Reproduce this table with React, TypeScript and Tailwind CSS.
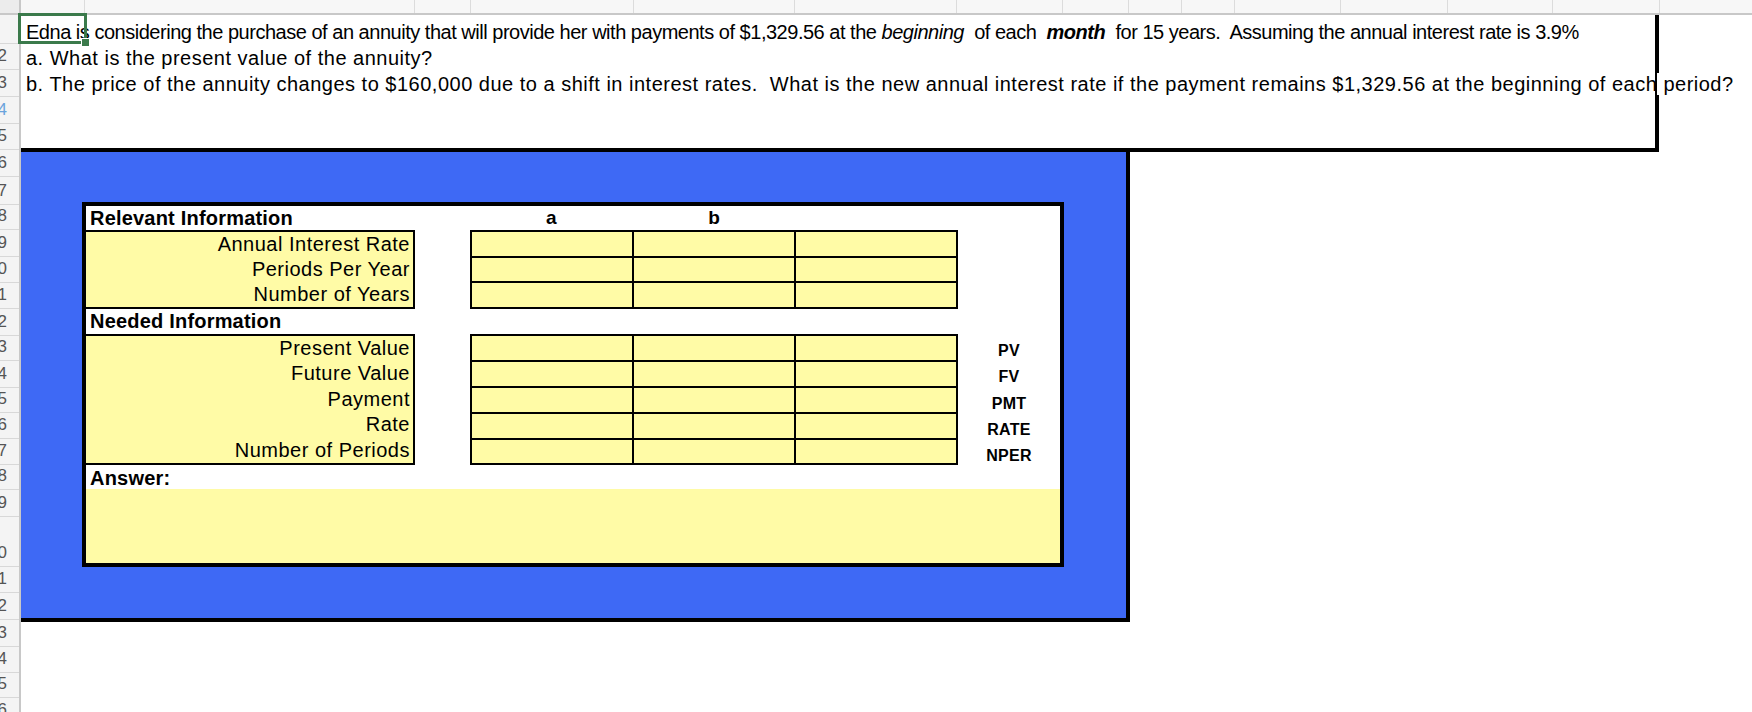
const COLS = [
  "w-[64px]",
  "w-[330px]",
  "w-[56px]",
  "w-[163px]",
  "w-[161px]",
  "w-[162px]",
  "w-[106px]",
  "w-[66px]",
  "w-[53px]",
  "w-[53px]",
  "w-[106px]",
  "w-[107px]",
  "w-[105px]",
  "w-[107px]",
  "w-[120px]",
];

// row number, height class, highlighted
const ROWS: [string, string, boolean?][] = [
  ["", "h-[29px]"],
  ["2", "h-[26px]"],
  ["3", "h-[27px]"],
  ["4", "h-[27px]", true],
  ["5", "h-[26px]"],
  ["6", "h-[27px]"],
  ["7", "h-[28px]"],
  ["8", "h-[25px]"],
  ["9", "h-[27px]"],
  ["10", "h-[26px]"],
  ["11", "h-[26px]"],
  ["12", "h-[27px]"],
  ["13", "h-[25px]"],
  ["14", "h-[27px]"],
  ["15", "h-[25px]"],
  ["16", "h-[26px]"],
  ["17", "h-[26px]"],
  ["18", "h-[25px]"],
  ["19", "h-[27px]"],
  ["20", "h-[50px]"],
  ["21", "h-[26px]"],
  ["22", "h-[27px]"],
  ["23", "h-[27px]"],
  ["24", "h-[26px]"],
  ["25", "h-[25px]"],
  ["26", "h-[26px]"],
];

const RELEVANT = ["Annual Interest Rate", "Periods Per Year", "Number of Years"];
const NEEDED = ["Present Value", "Future Value", "Payment", "Rate", "Number of Periods"];
const FUNCS = ["PV", "FV", "PMT", "RATE", "NPER"];

function ColumnHeader() {
  return (
    <div className="flex h-[15px] border-b-2 border-[#c8c8c8] bg-[#f7f7f7]">
      <div className="w-[21px] shrink-0 border-r-2 border-[#c8c8c8] bg-[#ececec]" />
      {COLS.map((w, i) => (
        <div key={i} className={`${w} shrink-0 border-r border-[#dcdcdc]`} />
      ))}
    </div>
  );
}

function RowHeader() {
  return (
    <div className="w-[21px] shrink-0 overflow-hidden border-r-2 border-[#c8c8c8] bg-[#f4f4f4]">
      {ROWS.map(([n, h, hi]) => (
        <div
          key={h + n}
          className={`${h} flex items-end justify-end border-b border-[#d8d8d8] pb-[3px] pr-[12px] text-[17px] leading-[20px] whitespace-nowrap ${
            hi ? "text-[#6aa3dc]" : "text-[#555]"
          }`}
        >
          {n}
        </div>
      ))}
    </div>
  );
}

function Grid({ rows }: { rows: string }) {
  const count = rows === "relevant" ? 9 : 15;
  return (
    <div
      className={`grid w-[488px] grid-cols-[160px_160px_160px] gap-[2px] bg-black p-[2px] ${
        rows === "relevant"
          ? "h-[79px] grid-rows-[24px_23px_24px]"
          : "h-[131px] grid-rows-[24px_24px_24px_24px_23px]"
      }`}
    >
      {Array.from({ length: count }).map((_, i) => (
        <div key={i} className="bg-[#fffba6]" />
      ))}
    </div>
  );
}

function Worksheet() {
  return (
    <div className="flex h-[365px] w-[982px] flex-col border-4 border-black bg-white">
      <div className="flex h-[24px]">
        <div className="w-[384px] pl-[4px] text-[20px] font-bold leading-[24px] tracking-[0.2px]">
          Relevant Information
        </div>
        <div className="grid w-[488px] grid-cols-3 text-center text-[19px] font-bold leading-[24px]">
          <div>a</div>
          <div>b</div>
          <div />
        </div>
      </div>

      <div className="flex h-[79px]">
        <div className="w-[329px] border-y-2 border-r-2 border-black bg-[#fffba6] pr-[3px] text-right text-[20px] leading-[25px] tracking-[0.5px]">
          {RELEVANT.map((t) => (
            <div key={t}>{t}</div>
          ))}
        </div>
        <div className="w-[55px]" />
        <Grid rows="relevant" />
      </div>

      <div className="h-[25px] pl-[4px] text-[20px] font-bold leading-[25px] tracking-[0.2px]">
        Needed Information
      </div>

      <div className="flex h-[131px]">
        <div className="w-[329px] border-y-2 border-r-2 border-black bg-[#fffba6] pr-[3px] text-right text-[20px] leading-[25.4px] tracking-[0.5px]">
          {NEEDED.map((t) => (
            <div key={t}>{t}</div>
          ))}
        </div>
        <div className="w-[55px]" />
        <Grid rows="needed" />
        <div className="flex w-[102px] flex-col">
          {FUNCS.map((f) => (
            <div
              key={f}
              className="flex h-[26.2px] items-end justify-center pb-[1px] text-[16px] font-bold leading-[17px] tracking-[0.3px]"
            >
              {f}
            </div>
          ))}
        </div>
      </div>

      <div className="h-[24px] pl-[4px] pt-[2px] text-[20px] font-bold leading-[22px] tracking-[0.2px]">
        Answer:
      </div>
      <div className="flex-1 bg-[#fffba6]" />
    </div>
  );
}

export default function App() {
  return (
    <div className="relative h-[712px] w-[1752px] overflow-hidden bg-white font-['Liberation_Sans',Arial,sans-serif] text-black">
      <ColumnHeader />
      <div className="flex">
        <RowHeader />
        <div className="flex flex-col">
          <div className="h-[137px] w-[1638px] border-r-4 border-b-4 border-black pl-[5px] pt-[4px] text-[20px] leading-[26px] whitespace-pre">
            <div className="tracking-[-0.48px]">
              {"Edna is considering the purchase of an annuity that will provide her with payments of $1,329.56 at the "}
              <i>beginning</i>
              {"  of each  "}
              <b>
                <i>month</i>
              </b>
              {"  for 15 years.  Assuming the annual interest rate is 3.9%"}
            </div>
            <div className="tracking-[0.5px]">a. What is the present value of the annuity?</div>
            <div className="tracking-[0.5px]">
              {"b. The price of the annuity changes to $160,000 due to a shift in interest rates.  What is the new annual interest rate if the payment remains $1,329.56 at the beginning of each"}
              <span className="bg-white"> period?</span>
            </div>
          </div>

          <div className="h-[470px] w-[1109px] border-r-4 border-b-4 border-black bg-[#3e69f5] pl-[61px] pt-[50px]">
            <Worksheet />
          </div>
        </div>
      </div>

      {/* active cell A1 */}
      <div className="absolute left-[18px] top-[13px] h-[31px] w-[69px] border-[3px] border-[#3b7a4b]" />
      <div className="absolute left-[81px] top-[38px] h-[9px] w-[9px] border border-white bg-[#3b7a4b]" />
    </div>
  );
}
